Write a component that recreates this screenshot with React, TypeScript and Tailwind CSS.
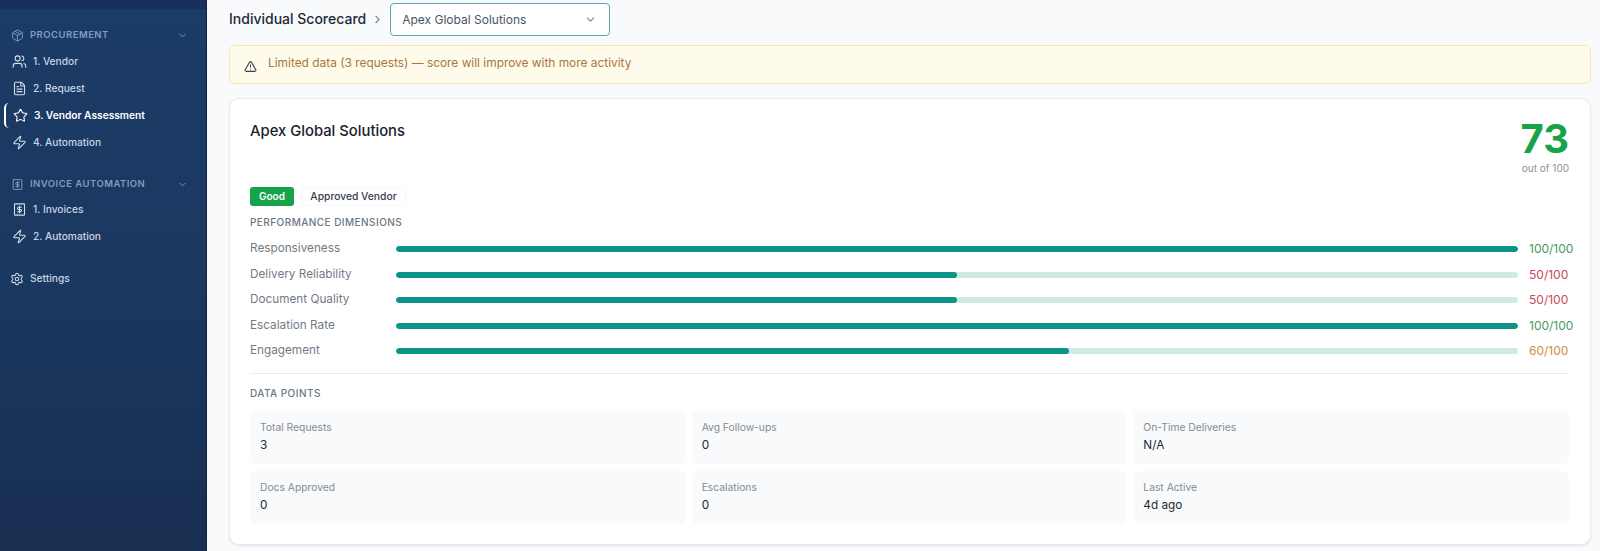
import {
  AlertTriangle,
  ChevronDown,
  ChevronRight,
  FileText,
  Package,
  Settings,
  Star,
  Users,
  Zap,
  type LucideProps,
} from "lucide-react";
import type { ComponentType } from "react";

type IconType = ComponentType<LucideProps>;

const dimensions = [
  { label: "Responsiveness", value: 100, color: "text-[#47985f]" },
  { label: "Delivery Reliability", value: 50, color: "text-[#c74a55]" },
  { label: "Document Quality", value: 50, color: "text-[#c74a55]" },
  { label: "Escalation Rate", value: 100, color: "text-[#47985f]" },
  { label: "Engagement", value: 60, color: "text-[#d58b42]" },
];

const dataPoints = [
  { label: "Total Requests", value: "3" },
  { label: "Avg Follow-ups", value: "0" },
  { label: "On-Time Deliveries", value: "N/A" },
  { label: "Docs Approved", value: "0" },
  { label: "Escalations", value: "0" },
  { label: "Last Active", value: "4d ago" },
];

// square invoice with a dollar sign, lucide has no exact match
function InvoiceIcon({ size = 15, strokeWidth = 2, className }: LucideProps) {
  return (
    <svg
      width={size}
      height={size}
      viewBox="0 0 24 24"
      fill="none"
      stroke="currentColor"
      strokeWidth={strokeWidth}
      strokeLinecap="round"
      strokeLinejoin="round"
      className={className}
    >
      <rect x="4" y="3" width="16" height="18" rx="1" />
      <path d="M15 8.5h-4.5a1.75 1.75 0 0 0 0 3.5h3a1.75 1.75 0 0 1 0 3.5H9" />
      <path d="M12 6.5v11" />
    </svg>
  );
}

function GroupHeader({ icon: Icon, label }: { icon: IconType; label: string }) {
  return (
    <div className="flex h-[26px] items-center pl-[11px] pr-[18px]">
      <Icon size={13} strokeWidth={1.75} className="text-[#7f9dbf]" />
      <span className="ml-[6px] flex-1 text-[9.5px] font-semibold tracking-[0.05em] text-[#7f9dbf]">
        {label}
      </span>
      <ChevronDown size={11} className="text-[#7f9dbf]" />
    </div>
  );
}

function NavItem({
  icon: Icon,
  label,
  active,
}: {
  icon: IconType;
  label: string;
  active?: boolean;
}) {
  return (
    <div className={active ? "relative flex h-[27px] items-center pl-[13px]" : "flex h-[27px] items-center pl-[12px]"}>
      {active && (
        <div className="absolute left-1 top-px h-[25px] w-[5px] rounded-l-[6px] border-l-[2.5px] border-white" />
      )}
      <Icon
        size={15}
        strokeWidth={1.75}
        className={active ? "text-white" : "text-[#d3deeb]"}
      />
      <span
        className={
          active
            ? "ml-[6px] text-[10.2px] font-semibold text-white"
            : "ml-[6px] text-[10.2px] font-medium text-[#c6d4e4]"
        }
      >
        {label}
      </span>
    </div>
  );
}

function Sidebar() {
  return (
    <aside className="flex w-[207px] shrink-0 flex-col border-r border-[#0f2240] bg-gradient-to-b from-[#1b3c67] via-[#1b3860] to-[#192f52]">
      <div className="h-[9px] bg-[#17315a]" />
      <div className="mt-[13px]">
        <GroupHeader icon={Package} label="PROCUREMENT" />
      </div>
      <div>
        <NavItem icon={Users} label="1. Vendor" />
        <NavItem icon={FileText} label="2. Request" />
        <NavItem icon={Star} label="3. Vendor Assessment" active />
        <NavItem icon={Zap} label="4. Automation" />
      </div>
      <div className="-mb-px mt-[15px]">
        <GroupHeader icon={InvoiceIcon} label="INVOICE AUTOMATION" />
      </div>
      <div>
        <NavItem icon={InvoiceIcon} label="1. Invoices" />
        <NavItem icon={Zap} label="2. Automation" />
      </div>
      <div className="mt-[15px] flex h-[27px] items-center pl-[10px]">
        <Settings size={14} strokeWidth={1.75} className="text-[#d3deeb]" />
        <span className="ml-[6px] text-[10.2px] font-medium text-[#c6d4e4]">Settings</span>
      </div>
    </aside>
  );
}

function Scorecard() {
  return (
    <section className="mt-[14px] rounded-[10px] border border-[#e8ebef] bg-white pb-5 pl-[20px] pr-[21px] pt-[18px] shadow-[0_1px_2px_rgba(15,23,42,0.1)]">
      <div className="flex justify-between">
        <h2 className="pt-[4px] text-[14.8px] font-medium leading-5 text-[#1a202c]">
          Apex Global Solutions
        </h2>
        <div className="flex flex-col items-end">
          <div className="text-[40px] font-bold leading-[44px] text-[#16a34a]">73</div>
          <div className="text-[10px] leading-[14px] text-[#8b929c]">out of 100</div>
        </div>
      </div>
      <div className="mt-[12px] flex items-center gap-[7px]">
        <span className="flex h-[19px] w-[44px] items-center justify-center rounded-[3px] bg-[#16a34a] text-[10px] font-semibold text-white">
          Good
        </span>
        <span className="flex h-[19px] w-[105px] items-center justify-center rounded-[3px] border border-[#f6f7f8] text-[10.3px] font-medium text-[#374151]">
          Approved Vendor
        </span>
      </div>
      <div className="mt-[9px] text-[10px] font-medium leading-[14px] tracking-[0.045em] text-[#6b7785]">
        PERFORMANCE DIMENSIONS
      </div>
      <div className="mt-[11px] flex flex-col gap-[7px]">
        {dimensions.map((d) => (
          <div key={d.label} className="flex h-[18.5px] items-center">
            <div className="w-[146px] shrink-0 text-[11.75px] text-[#737a86]">{d.label}</div>
            <div className="h-[6px] flex-1 overflow-hidden rounded-full bg-[#cfeae4]">
              <div
                className="h-full rounded-full bg-[#0d9488]"
                style={{ width: `${d.value}%` }}
              />
            </div>
            <div className={`w-[51px] shrink-0 whitespace-nowrap pl-[11px] text-xs font-normal ${d.color}`}>
              {d.value}/100
            </div>
          </div>
        ))}
      </div>
      <div className="mt-[12px] border-t border-[#e9ebef]" />
      <div className="mt-[12px] text-[10px] font-medium leading-[14px] tracking-[0.045em] text-[#6b7785]">
        DATA POINTS
      </div>
      <div className="mt-[11px] grid grid-cols-3 gap-x-[6px] gap-y-[7px]">
        {dataPoints.map((p) => (
          <div key={p.label} className="h-[53px] rounded-md bg-[#f8fafb] px-[10px] pt-[9px]">
            <div className="text-[10.3px] leading-[14px] text-[#858c96]">{p.label}</div>
            <div className="mt-[2px] text-[11.75px] font-normal leading-[18px] text-[#1f2937]">
              {p.value}
            </div>
          </div>
        ))}
      </div>
    </section>
  );
}

export default function App() {
  return (
    <div className="flex h-[551px] w-[1600px] overflow-hidden bg-[#f8fafc] font-['Inter',sans-serif]">
      <Sidebar />
      <main className="flex-1 pl-[22px] pr-[9px] pt-[3px]">
        <div className="flex h-[32px] items-center">
          <span className="text-sm font-medium text-[#1f2937]">Individual Scorecard</span>
          <ChevronRight size={13} className="ml-[5px] text-[#7b8490]" />
          <div className="ml-[6px] flex h-[33px] w-[220px] items-center justify-between rounded-[4px] border border-[#5aa9ac] bg-white pl-[11px] pr-[12px] pt-px">
            <span className="text-xs text-[#4b5563]">Apex Global Solutions</span>
            <ChevronDown size={13} className="text-[#7b8490]" />
          </div>
        </div>
        <div className="mt-[10px] flex h-[39px] items-center rounded-md border border-[#fbe8a6] bg-[#fffbeb] pl-[14px]">
          <AlertTriangle size={13} className="mt-[3px] text-[#374151]" />
          <span className="ml-[11px] -mt-[4px] text-[11.9px] text-[#a8763e]">
            Limited data (3 requests) — score will improve with more activity
          </span>
        </div>
        <Scorecard />
      </main>
    </div>
  );
}
